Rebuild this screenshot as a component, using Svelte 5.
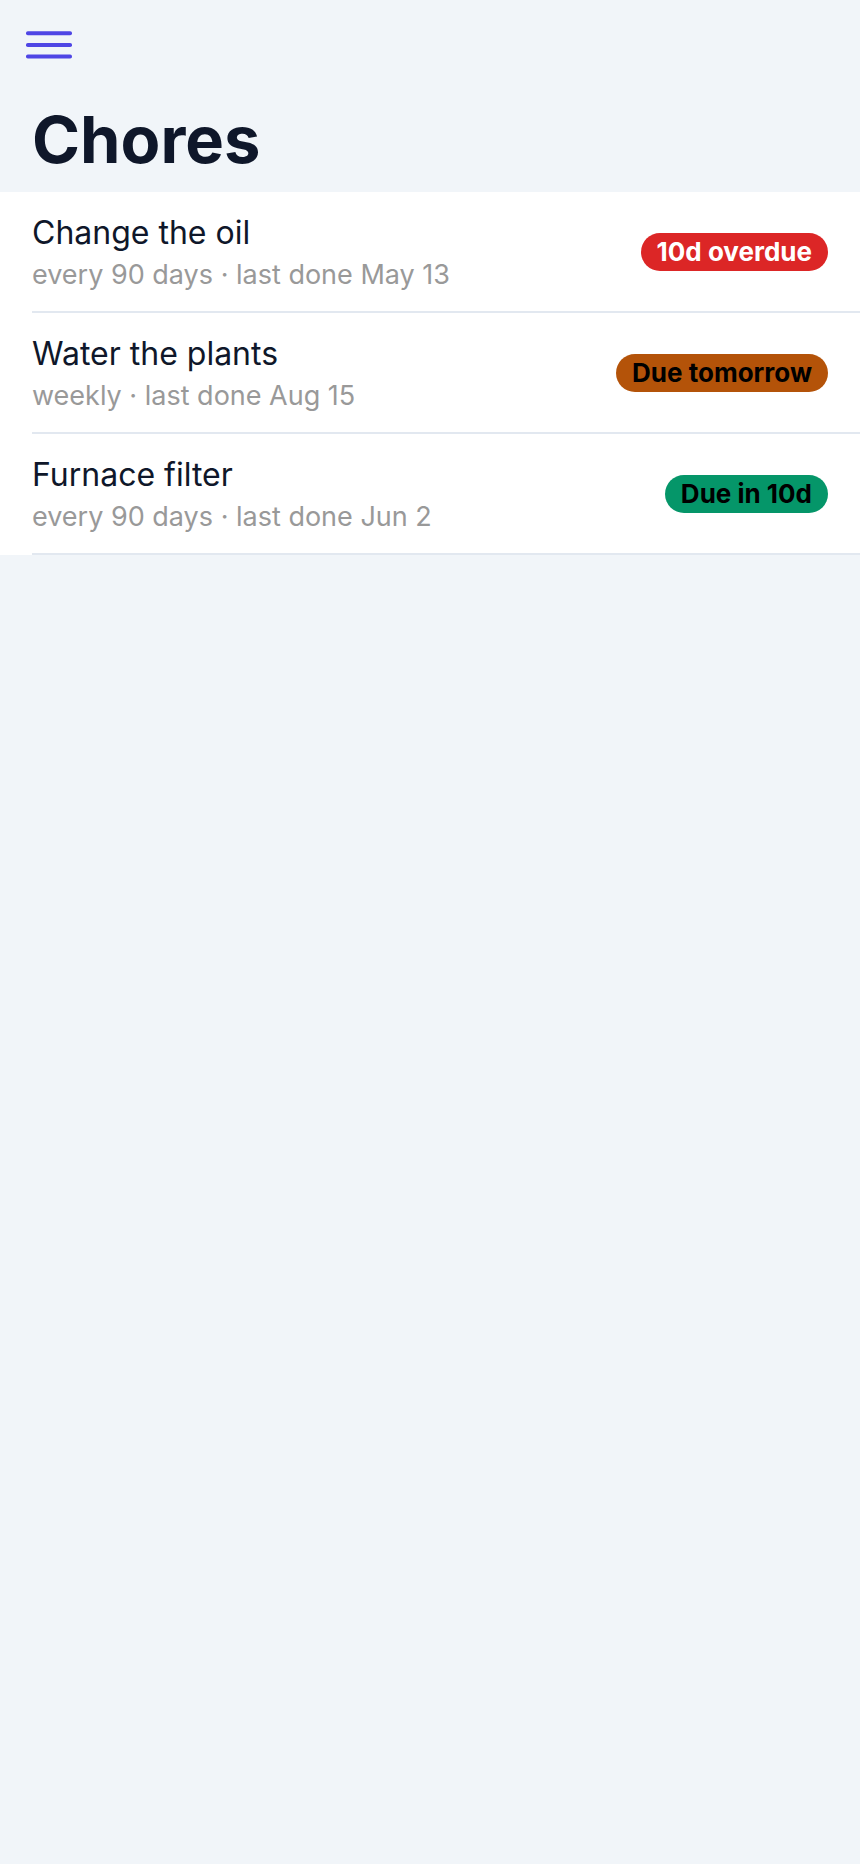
<script>
  const chores = [
    { name: 'Change the oil', detail: 'every 90 days · last done May 13', status: '10d overdue', tone: 'danger' },
    { name: 'Water the plants', detail: 'weekly · last done Aug 15', status: 'Due tomorrow', tone: 'warning' },
    { name: 'Furnace filter', detail: 'every 90 days · last done Jun 2', status: 'Due in 10d', tone: 'success' }
  ];
</script>

<main>
  <header>
    <button class="menu" type="button" aria-label="Menu">
      <svg viewBox="0 0 48 32" width="48" height="32" fill="currentColor" aria-hidden="true">
        <rect x="2" y="3.3" width="46" height="4" rx="1.8" />
        <rect x="2" y="15" width="46" height="4" rx="1.8" />
        <rect x="2" y="26.6" width="46" height="4" rx="1.8" />
      </svg>
    </button>
  </header>
  <h1>Chores</h1>
  <ul>
    {#each chores as chore}
      <li>
        <div class="row">
          <div class="label">
            <h2>{chore.name}</h2>
            <p>{chore.detail}</p>
          </div>
          <span class="badge {chore.tone}">{chore.status}</span>
        </div>
      </li>
    {/each}
  </ul>
</main>

<style>
  :global(body) { background: #f1f5f9; }
  main { font-family: Inter, sans-serif; color: #0f172a; }
  header { display: flex; align-items: center; height: 88px; padding: 0 24px; }
  .menu { display: flex; padding: 0; border: 0; background: none; color: #4f46e5; cursor: pointer; }
  h1 { margin: 0; padding: 12px 32px; font-size: 65px; line-height: 80px; font-weight: 700; }
  ul { margin: 0; padding: 0; list-style: none; background: #fff; }
  li { padding-left: 32px; }
  .row { display: flex; align-items: center; justify-content: space-between; gap: 16px; padding-right: 32px; border-bottom: 2px solid #e2e8f0; }
  .label { padding: 20px 0 15px; }
  h2 { margin: 0; font-size: 32px; line-height: 42px; font-weight: 400; }
  p { margin: 0; font-size: 27px; line-height: 42px; color: #999; }
  .badge { flex-shrink: 0; padding: 0 16px; border-radius: 20px; font-size: 26px; line-height: 38px; font-weight: 700; }
  .danger { background: #dc2626; color: #fff; }
  .warning { background: #b45309; color: #000; }
  .success { background: #059669; color: #000; }
</style>
